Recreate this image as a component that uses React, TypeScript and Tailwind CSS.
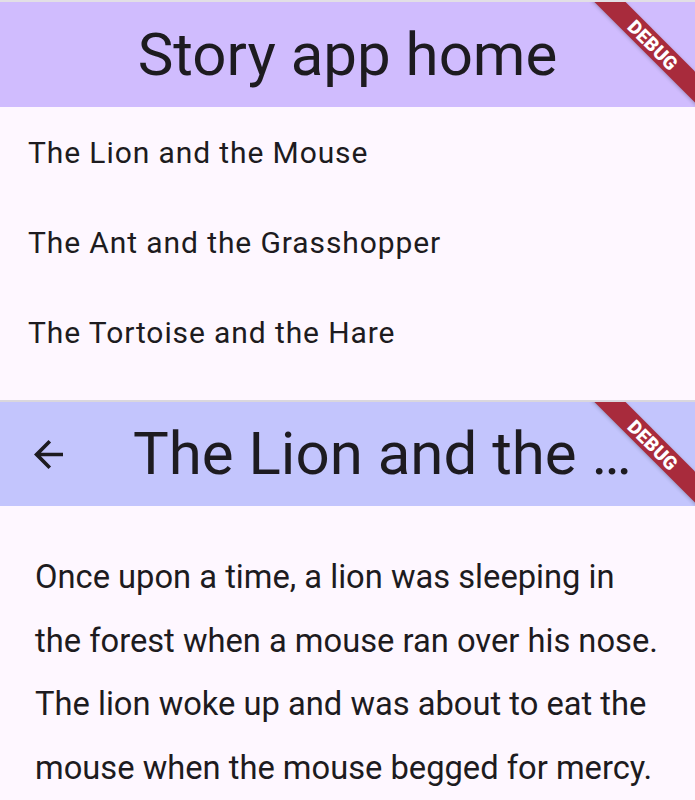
import { type ReactNode } from 'react'

const stories = [
  'The Lion and the Mouse',
  'The Ant and the Grasshopper',
  'The Tortoise and the Hare',
]

const lionStory =
  'Once upon a time, a lion was sleeping in the forest when a mouse ran over his nose. The lion woke up and was about to eat the mouse when the mouse begged for mercy. The lion laughed and let the little mouse go. Some days later the lion was caught in a hunter\u2019s net, and the mouse gnawed the ropes and set him free.'

// ─── Flutter debug banner ─────────────────────────────────────────────────────

function DebugBanner() {
  return (
    <div className="pointer-events-none absolute right-[-33px] top-[32px] flex h-[22px] w-[150px] rotate-45 items-center justify-center bg-[#a82b3c] shadow-[0_1px_4px_rgba(0,0,0,0.25)]">
      <span className="text-[19px] font-black leading-none tracking-[0.2px] text-white">DEBUG</span>
    </div>
  )
}

function AppBar({ color, children }: { color: string; children: ReactNode }) {
  return (
    <div className={`relative flex overflow-hidden ${color}`}>
      {children}
      <DebugBanner />
    </div>
  )
}

function BackArrow() {
  return (
    <svg viewBox="4 4 16 16" className="h-[29px] w-[29px]" fill="#1d1b20">
      <path d="M20 11H7.83l5.59-5.59L12 4l-8 8 8 8 1.41-1.41L7.83 13H20v-2z" />
    </svg>
  )
}

// ─── Screens ──────────────────────────────────────────────────────────────────

function HomeScreen() {
  return (
    <div>
      <div className="h-[2px] bg-[#e2dfe5]" />
      <AppBar color="bg-[#d0bcfe] h-[105px] items-center justify-center">
        <h1 className="text-[60px] leading-none text-[#1d1b20]">Story app home</h1>
      </AppBar>
      <ul className="h-[293px]">
        {stories.map((title) => (
          <li
            key={title}
            className="flex h-[90px] items-center px-[28px] text-[30px] tracking-[0.9px] text-[#1d1b20]"
          >
            {title}
          </li>
        ))}
      </ul>
      <div className="h-[2px] bg-[#dad7dd]" />
    </div>
  )
}

function StoryScreen() {
  return (
    <div>
      <AppBar color="bg-[#c3c5fd] h-[104px] items-center">
        <div className="flex w-[133px] shrink-0 items-center pl-[34px]">
          <BackArrow />
        </div>
        <h1 className="min-w-0 max-w-[500px] truncate text-[60px] leading-none text-[#1d1b20]">
          The Lion and the Mouse
        </h1>
      </AppBar>
      <p className="pl-[35px] pr-[30px] pt-[40px] text-[32.7px] leading-[63.5px] text-[#1d1b20]">
        {lionStory}
      </p>
    </div>
  )
}

export default function App() {
  return (
    <div className="h-[800px] w-[695px] overflow-hidden bg-[#fef7ff] font-['Roboto',sans-serif]">
      <HomeScreen />
      <StoryScreen />
    </div>
  )
}
